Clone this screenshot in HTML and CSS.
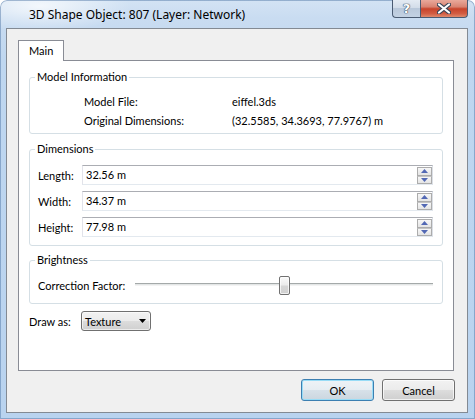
FILE: index.html
```html
<!DOCTYPE html>
<html>
<head>
<meta charset="utf-8">
<title>3D Shape Object</title>
<link rel="stylesheet" href="styles.css">
</head>
<body>
<div class="window">
  <div class="titlebar">
    <span class="title">3D Shape Object: 807 (Layer: Network)</span>
    <div class="caption-buttons">
      <div class="cap help"><span>?</span></div>
      <div class="cap close">
        <svg width="14" height="11" viewBox="0 0 14 11">
          <path d="M2 1.5 L12 9.5 M12 1.5 L2 9.5" stroke="#3a4556" stroke-width="4.2" stroke-linecap="round" fill="none"/>
          <path d="M2 1.5 L12 9.5 M12 1.5 L2 9.5" stroke="#ffffff" stroke-width="2.2" stroke-linecap="round" fill="none"/>
        </svg>
      </div>
    </div>
  </div>

  <div class="client">
    <div class="tabs">
      <div class="tab">Main</div>
    </div>
    <div class="panel">
      <fieldset class="group">
        <legend>Model Information</legend>
        <div class="info-body">
          <div class="info-row"><span class="info-key">Model File:</span><span>eiffel.3ds</span></div>
          <div class="info-row"><span class="info-key">Original Dimensions:</span><span>(32.5585, 34.3693, 77.9767) m</span></div>
        </div>
      </fieldset>

      <fieldset class="group group-dims">
        <legend>Dimensions</legend>
        <div class="dims-body">
          <div class="dim-row">
            <span class="dim-label">Length:</span>
            <div class="spinbox">
              <span class="spin-value">32.56 m</span>
              <div class="spin">
                <b><svg width="7" height="4" viewBox="0 0 7 4"><polygon points="0,4 3.5,0 7,4" fill="#5268b4"/></svg></b>
                <b><svg width="7" height="4" viewBox="0 0 7 4"><polygon points="0,0 7,0 3.5,4" fill="#5268b4"/></svg></b>
              </div>
            </div>
          </div>
          <div class="dim-row">
            <span class="dim-label">Width:</span>
            <div class="spinbox">
              <span class="spin-value">34.37 m</span>
              <div class="spin">
                <b><svg width="7" height="4" viewBox="0 0 7 4"><polygon points="0,4 3.5,0 7,4" fill="#5268b4"/></svg></b>
                <b><svg width="7" height="4" viewBox="0 0 7 4"><polygon points="0,0 7,0 3.5,4" fill="#5268b4"/></svg></b>
              </div>
            </div>
          </div>
          <div class="dim-row">
            <span class="dim-label">Height:</span>
            <div class="spinbox">
              <span class="spin-value">77.98 m</span>
              <div class="spin">
                <b><svg width="7" height="4" viewBox="0 0 7 4"><polygon points="0,4 3.5,0 7,4" fill="#5268b4"/></svg></b>
                <b><svg width="7" height="4" viewBox="0 0 7 4"><polygon points="0,0 7,0 3.5,4" fill="#5268b4"/></svg></b>
              </div>
            </div>
          </div>
        </div>
      </fieldset>

      <fieldset class="group group-bright">
        <legend>Brightness</legend>
        <div class="bright-body">
          <span class="slider-label">Correction Factor:</span>
          <div class="slider">
            <div class="track"></div>
            <div class="thumb" style="left: 144px"></div>
          </div>
        </div>
      </fieldset>

      <div class="drawas-row">
        <span class="drawas-label">Draw as:</span>
        <div class="combo">
          <span class="combo-text">Texture</span>
          <svg width="7" height="4" viewBox="0 0 7 4"><polygon points="0,0 7,0 3.5,4" fill="#000"/></svg>
        </div>
      </div>
    </div>

    <div class="buttons">
      <div class="btn btn-default">OK</div>
      <div class="btn">Cancel</div>
    </div>
  </div>
</div>
</body>
</html>
```
FILE: styles.css
```css
* { box-sizing: border-box; }
html, body { margin: 0; background: #fff; }
body {
  font-family: Lato, "Noto Sans", sans-serif;
  font-size: 11px;
  color: #000;
}

.window {
  width: 475px;
  height: 419px;
  padding: 0 7px 6px 6px;
  border-radius: 7px 7px 0 0;
  background:
    radial-gradient(ellipse 90px 26px at 40px 6px, rgba(255,255,255,0.75), rgba(255,255,255,0)),
    linear-gradient(180deg, #d3e3f4 0, #c9dcf1 18px, #bfd7f0 60px, #b9d3ef 100%);
  box-shadow: inset 0 0 0 1px rgba(70, 110, 160, 0.45);
  display: flex;
  flex-direction: column;
}

.titlebar {
  height: 28px;
  display: flex;
  align-items: flex-start;
  flex: none;
}
.title {
  font-family: "Noto Sans", sans-serif;
  font-size: 12px;
  line-height: 30px;
  padding-left: 23px;
  color: #000;
}
.caption-buttons {
  margin-left: auto;
  display: flex;
}
.cap {
  height: 18px;
  border: 1px solid #4a5b72;
  border-top: none;
  display: flex;
  align-items: center;
  justify-content: center;
}
.help {
  width: 28px;
  border-right: none;
  border-radius: 0 0 0 4px;
  background: linear-gradient(180deg, #e4ebf3 0, #d3dde9 45%, #b9c8da 50%, #c3d2e3 100%);
}
.help span {
  font: bold 13px "DejaVu Sans", sans-serif;
  color: #fff;
  text-shadow: 0 0 1px #34445a, 0 0 1px #34445a, 0 0 1px #34445a;
  line-height: 16px;
}
.close {
  width: 48px;
  border-radius: 0 0 4px 0;
  background: linear-gradient(180deg, #e9a99b 0, #d98472 40%, #c8442b 52%, #d25d43 80%, #e08a6c 100%);
}

.client {
  flex: 1;
  border: 1px solid #838a93;
  background: #f0f0f0;
  padding: 11px 13px 0 11px;
  display: flex;
  flex-direction: column;
}

.tabs {
  height: 20px;
  display: flex;
  position: relative;
  z-index: 1;
}
.tab {
  width: 46px;
  height: 21px;
  border: 1px solid #898c95;
  border-bottom: none;
  background: #fff;
  padding-left: 10px;
  line-height: 19px;
}

.panel {
  height: 311px;
  border: 1px solid #898c95;
  background: #fff;
  padding: 0 10px;
}

.group {
  margin: 8px 0 0;
  padding: 0;
  min-width: 0;
  border: 1px solid #d5dfe5;
  border-radius: 3px;
}
.group legend {
  margin-left: 5px;
  padding: 0 2px;
  line-height: 16px;
}
.group-dims { margin-top: 7px; }
.group-bright { margin-top: 6px; }

.info-body { padding: 7px 9px 3px 54px; }
.info-row { display: flex; line-height: 19px; }
.info-key { width: 148px; }

.dims-body {
  padding: 8px 9px 8px 8px;
  display: flex;
  flex-direction: column;
  gap: 6px;
}
.dim-row { display: flex; align-items: center; height: 20px; }
.dim-label { width: 44px; }
.spinbox {
  flex: 1;
  height: 20px;
  display: flex;
  border: 1px solid;
  border-color: #abadb3 #dbdfe6 #e3e9ef #e2e3ea;
  background: #fff;
}
.spin-value { flex: 1; padding-left: 3px; line-height: 18px; }
.spin {
  width: 15px;
  display: flex;
  flex-direction: column;
  margin-top: 1px;
}
.spin b {
  flex: 1;
  border: 1px solid #acacac;
  background: linear-gradient(180deg, #f7f7f7, #e4e4e4);
  display: flex;
  align-items: center;
  justify-content: center;
}
.spin b + b { border-top-color: #c4c4c4; }

.bright-body {
  padding: 8px 9px 8px 8px;
  display: flex;
  height: 35px;
  align-items: center;
}
.slider-label { width: 97px; }
.slider {
  flex: 1;
  height: 19px;
  position: relative;
}
.track {
  margin-top: 7px;
  height: 3px;
  border-top: 1px solid #a4a9a9;
  background: #e3e6e6;
  border-bottom: 1px solid #f3f3f3;
}
.thumb {
  position: absolute;
  top: 0;
  width: 11px;
  height: 19px;
  border: 1px solid #707070;
  border-radius: 2px;
  background: linear-gradient(180deg, #fafafa 0, #ececec 45%, #d6d6d6 55%, #d0d0d0 100%);
  box-shadow: inset 0 0 0 1px rgba(255,255,255,0.7);
}

.drawas-row {
  margin-top: 7px;
  display: flex;
  align-items: center;
  height: 20px;
}
.drawas-label { width: 52px; }
.combo {
  width: 70px;
  height: 20px;
  border: 1px solid #707070;
  border-radius: 3px;
  background: linear-gradient(180deg, #f2f2f2 0, #ebebeb 50%, #dddddd 50%, #cfcfcf 100%);
  box-shadow: inset 0 0 0 1px rgba(255,255,255,0.6);
  display: flex;
  align-items: center;
  padding: 0 4px 0 3px;
}
.combo-text { flex: 1; }

.buttons {
  margin-top: 8px;
  margin-right: -1px;
  display: flex;
  justify-content: flex-end;
  gap: 8px;
}
.btn {
  width: 73px;
  height: 22px;
  border: 1px solid #707070;
  border-radius: 3px;
  background: linear-gradient(180deg, #f2f2f2 0, #ebebeb 50%, #dddddd 50%, #cfcfcf 100%);
  box-shadow: inset 0 0 0 1px rgba(255,255,255,0.7);
  display: flex;
  align-items: center;
  justify-content: center;
}
.btn-default {
  border-color: #3c7fb1;
  background: linear-gradient(180deg, #eef3f7 0, #e6edf2 50%, #d7e1e9 50%, #cbd6df 100%);
  box-shadow: inset 0 0 0 1px #98dcf6;
}
```
